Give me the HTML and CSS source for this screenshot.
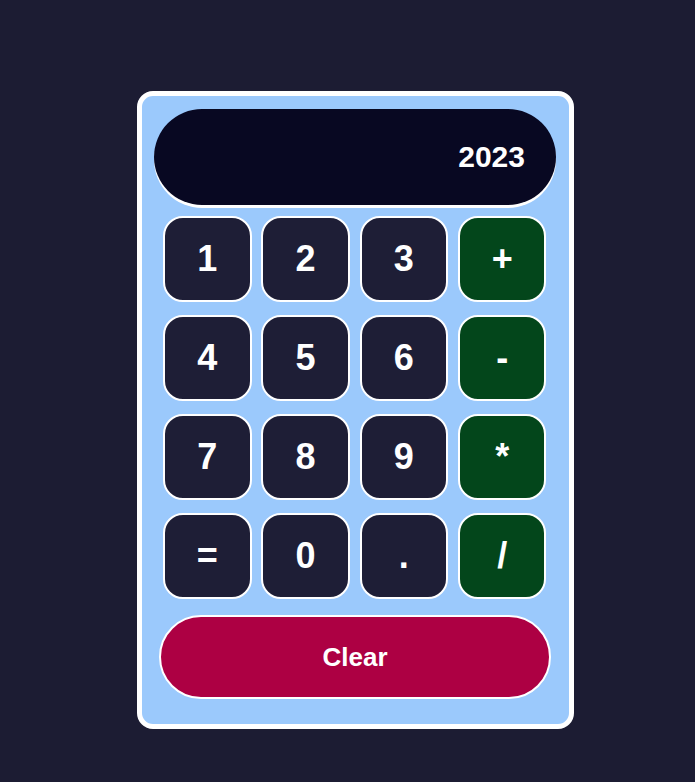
FILE: index.html
```html
<!DOCTYPE html>
<html>
<head>
<meta charset="utf-8">
<link rel="stylesheet" href="styles.css">
</head>
<body>
<div class="calc">
  <div class="display">2023</div>
  <div class="keys">
    <button class="key">1</button>
    <button class="key">2</button>
    <button class="key">3</button>
    <button class="key op">+</button>
    <button class="key">4</button>
    <button class="key">5</button>
    <button class="key">6</button>
    <button class="key op">-</button>
    <button class="key">7</button>
    <button class="key">8</button>
    <button class="key">9</button>
    <button class="key op">*</button>
    <button class="key">=</button>
    <button class="key">0</button>
    <button class="key">.</button>
    <button class="key op">/</button>
  </div>
  <button class="clear">Clear</button>
</div>
</body>
</html>
```

FILE: styles.css
```css
html, body {
  margin: 0;
  padding: 0;
  background: #1c1c33;
  font-family: "Liberation Sans", Arial, sans-serif;
}
body {
  padding: 91px 0 0 137px;
  height: 782px;
  box-sizing: border-box;
}
.calc {
  width: 437px;
  height: 638px;
  box-sizing: border-box;
  border: 5px solid #ffffff;
  border-radius: 16px;
  background: #9bc9fc;
  display: flex;
  flex-direction: column;
}
.display {
  margin: 13px 13px 0 12px;
  height: 96px;
  border-radius: 48px;
  background: #080822;
  box-shadow: 0 3px 0 #ffffff;
  color: #ffffff;
  font-weight: bold;
  font-size: 30px;
  display: flex;
  align-items: center;
  justify-content: flex-end;
  padding-right: 31px;
  box-sizing: border-box;
}
.keys {
  margin: 11px 0 0 21px;
  display: grid;
  grid-template-columns: repeat(4, 88.5px);
  grid-auto-rows: 86px;
  column-gap: 9.8px;
  row-gap: 13px;
}
.key {
  border: 2px solid #ffffff;
  border-radius: 20px;
  background: #1e1e36;
  color: #ffffff;
  font-family: "Liberation Sans", Arial, sans-serif;
  font-weight: bold;
  font-size: 36px;
  padding: 0;
  display: flex;
  align-items: center;
  justify-content: center;
}
.key.op {
  background: #03461b;
}
.clear {
  margin: 16px 0 0 17px;
  width: 392px;
  height: 84px;
  border: 2px solid #ffffff;
  border-radius: 42px;
  background: #ad0043;
  color: #ffffff;
  font-family: "Liberation Sans", Arial, sans-serif;
  font-weight: bold;
  font-size: 26px;
  padding: 0;
}
```
